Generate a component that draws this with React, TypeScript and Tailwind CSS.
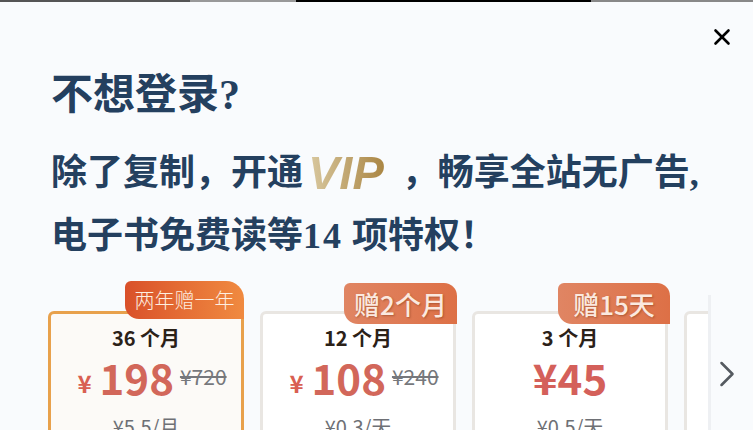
import { ChevronRight, X } from "lucide-react"

const plans = [
  { months: "36 个月", price: "198", old: "¥720", unit: "¥5.5/月", gift: "两年赠一年", active: true },
  { months: "12 个月", price: "108", old: "¥240", unit: "¥0.3/天", gift: "赠2个月", giftBox: "-right-[4px] w-[113px]" },
  { months: "3 个月", price: "45", unit: "¥0.5/天", gift: "赠15天", giftBox: "-right-[5px] w-[112px]" },
  { months: "", price: "", unit: "" },
]

function Plan({ plan }: { plan: (typeof plans)[number] }) {
  return (
    <div
      className={`relative h-[150px] w-[196px] shrink-0 rounded-[6px] border-[3px] text-center ${
        plan.active ? "border-[#e8a14c] bg-[#fcfaf7]" : "border-[#e9e6e2] bg-white"
      }`}
    >
      {plan.gift &&
        (plan.active ? (
          <div className="absolute -top-[33px] -right-[3px] flex h-[38px] w-[119px] items-center justify-center rounded-tl-[6px] rounded-tr-[18px] rounded-bl-[14px] bg-gradient-to-r from-[#d9502a] to-[#f08a40] text-[20px] leading-none font-light text-[#fdeee0]">
            {plan.gift}
          </div>
        ) : (
          <div
            className={`absolute -top-[31px] flex h-[41px] items-center justify-center rounded-tl-[6px] rounded-tr-[13px] rounded-bl-[14px] bg-gradient-to-r from-[#e08563] to-[#dd7046] text-[26px] leading-none font-medium text-[#fbe9df] [text-shadow:1px_1px_2px_rgba(120,50,20,0.45)] ${plan.giftBox}`}
          >
            {plan.gift}
          </div>
        ))}
      {plan.months && (
        <>
          <div className="mt-[11px] text-[20px] leading-[26px] font-bold text-[#2b2118]">{plan.months}</div>
          <div className="flex h-[52px] items-center justify-center font-bold text-[#d2675a]">
            {plan.old ? (
              <div className="flex items-center pl-[12px]">
                <span className="mt-[12px] mr-[8px] text-[24px] leading-none text-[#d95f52]">¥</span>
                <span className="text-[42px] leading-none">{plan.price}</span>
                <span className="mb-[1px] ml-[6px] text-[21px] leading-none font-normal text-[#76787c] line-through">
                  {plan.old}
                </span>
              </div>
            ) : (
              <span className="text-[42px] leading-none text-[#d4605a]">¥{plan.price}</span>
            )}
          </div>
          <div className="mt-[11px] text-[20px] leading-[26px] text-[#6e7075]">{plan.unit}</div>
        </>
      )}
    </div>
  )
}

export default function App() {
  return (
    <div className="h-[430px] w-[753px] overflow-hidden bg-[#f9fbfd] font-['Noto_Sans_CJK_SC',sans-serif]">
      <div className="flex h-[2px]">
        <div className="w-[190px] bg-[#555555]" />
        <div className="w-[106px] bg-[#999999]" />
        <div className="w-[295px] bg-black" />
        <div className="flex-1 bg-[#888888]" />
      </div>
      <div className="flex justify-end pt-[22px] pr-[18px]">
        <X size={26} strokeWidth={2.4} className="text-black" />
      </div>
      <div className="pl-[51px] font-['Liberation_Serif','Noto_Sans_CJK_SC',serif] font-bold text-[#24405f]">
        <h1 className="mt-[17px] text-[42px] leading-[56px]">不想登录?</h1>
        <p className="mt-[27px] flex h-[46px] items-center text-[36px] whitespace-nowrap">
          除了复制，开通
          <span className="mr-[14px] ml-[5px] bg-gradient-to-r from-[#d9c9a0] to-[#a8833e] bg-clip-text pr-[4px] font-['Liberation_Sans',sans-serif] text-[47px] font-bold text-transparent italic">
            VIP
          </span>
          ，畅享全站无广告,
        </p>
        <p className="mt-[17px] h-[46px] text-[36px] leading-[46px] whitespace-nowrap">
          电子书免费读等<span className="tracking-[2px]">14</span> 项特权！
        </p>
      </div>
      <div className="mt-[19px] flex items-center">
        <div className="ml-[48px] flex w-[660px] gap-[16px] overflow-hidden pt-[33px]">
          {plans.map((plan, i) => (
            <Plan key={i} plan={plan} />
          ))}
        </div>
        <div className="mt-[17px] h-[166px] w-[3px] bg-[#eef0f3]" />
        <ChevronRight size={44} strokeWidth={1.4} className="mt-[8px] -ml-[6px] text-[#555a60]" />
      </div>
    </div>
  )
}
